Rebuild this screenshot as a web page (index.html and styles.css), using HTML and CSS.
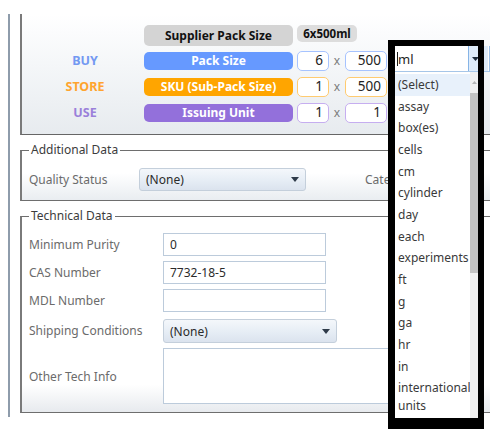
FILE: index.html
```html
<!DOCTYPE html>
<html>
<head>
<meta charset="utf-8">
<title>Item Details</title>
<link rel="stylesheet" href="styles.css">
</head>
<body>
<div class="page">
  <div class="frame">
    <section class="pack">
      <div class="pack-grid">
        <span class="role"></span>
        <div class="pill pill-supplier">Supplier Pack Size</div>
        <div class="pack-value">6x500ml</div>

        <div class="role role-buy">BUY</div>
        <div class="pill pill-buy">Pack Size</div>
        <div class="num num-buy">6</div>
        <div class="times">x</div>
        <div class="num num-buy">500</div>

        <div class="role role-store">STORE</div>
        <div class="pill pill-store">SKU (Sub-Pack Size)</div>
        <div class="num num-store">1</div>
        <div class="times">x</div>
        <div class="num num-store">500</div>

        <div class="role role-use">USE</div>
        <div class="pill pill-use">Issuing Unit</div>
        <div class="num num-use">1</div>
        <div class="times">x</div>
        <div class="num num-use">1</div>
      </div>
    </section>

    <fieldset class="group group-additional">
      <legend>Additional Data</legend>
      <div class="field-row">
        <span class="label label-quality">Quality Status</span>
        <div class="combo combo-quality">
          <span>(None)</span>
          <svg class="caret" width="8" height="5" viewBox="0 0 8 5"><path d="M0 0h8L4 5z" fill="#2f3b4a"/></svg>
        </div>
        <span class="label label-cate">Cate</span>
      </div>
    </fieldset>

    <fieldset class="group group-technical">
      <legend>Technical Data</legend>
      <div class="tech-grid">
        <span class="label">Minimum Purity</span>
        <div class="text-input">0</div>
        <span class="label">CAS Number</span>
        <div class="text-input">7732-18-5</div>
        <span class="label">MDL Number</span>
        <div class="text-input"></div>
        <span class="label">Shipping Conditions</span>
        <div class="combo combo-shipping">
          <span>(None)</span>
          <svg class="caret" width="8" height="5" viewBox="0 0 8 5"><path d="M0 0h8L4 5z" fill="#2f3b4a"/></svg>
        </div>
        <span class="label">Other Tech Info</span>
        <div class="text-area"></div>
      </div>
    </fieldset>
  </div>

  <div class="dropdown">
    <div class="dd-field">
      <span class="dd-caret-line"></span><span class="dd-value">ml</span>
      <div class="dd-button">
        <svg width="7" height="4" viewBox="0 0 7 4"><path d="M0 0h7L3.5 4z" fill="#1f2d3d"/></svg>
      </div>
    </div>
    <div class="dd-list">
      <ul class="dd-items">
        <li class="dd-item dd-selected">(Select)</li>
        <li class="dd-item">assay</li>
        <li class="dd-item">box(es)</li>
        <li class="dd-item">cells</li>
        <li class="dd-item">cm</li>
        <li class="dd-item">cylinder</li>
        <li class="dd-item">day</li>
        <li class="dd-item">each</li>
        <li class="dd-item">experiments</li>
        <li class="dd-item">ft</li>
        <li class="dd-item">g</li>
        <li class="dd-item">ga</li>
        <li class="dd-item">hr</li>
        <li class="dd-item">in</li>
        <li class="dd-item">international units</li>
      </ul>
      <div class="dd-scroll">
        <div class="dd-scroll-up">
          <svg width="5" height="3" viewBox="0 0 5 3"><path d="M0 3h5L2.5 0z" fill="#b5b5b5"/></svg>
        </div>
        <div class="dd-thumb"></div>
      </div>
    </div>
  </div>
  <div class="highlight-box"></div>
</div>
</body>
</html>
```

FILE: styles.css
```css
html, body {
  margin: 0;
  padding: 0;
  background: #ffffff;
}

body {
  font-family: "Noto Sans", "Open Sans", "DejaVu Sans", sans-serif;
  font-size: 12px;
  color: #333333;
}

.page {
  position: relative;
  width: 490px;
  height: 429px;
  overflow: hidden;
  padding-top: 14px;
  box-sizing: border-box;
}

.frame {
  margin-left: 8px;
  border-left: 2px solid #8e9cab;
  padding-left: 10px;
  padding-bottom: 4px;
}

/* ---------- pack section ---------- */
.pack {
  border-left: 2px solid #7a7a7a;
  border-bottom: 1px solid #666666;
  background: linear-gradient(to bottom, #ffffff 0%, #fbfcfd 15%, #e7ebef 100%);
  padding: 10px 0 10px 8px;
}

.pack-grid {
  display: grid;
  grid-template-columns: 110px 149px 32px 8px 42px;
  column-gap: 4px;
  row-gap: 4px;
  grid-auto-rows: 22px;
  align-items: center;
}

.role {
  text-align: center;
  font-weight: 700;
  font-size: 12.5px;
  line-height: 18px;
}

.role-buy { color: #7399f2; }
.role-store { color: #ffa42e; }
.role-use { color: #9a80da; }

.pill {
  height: 18px;
  line-height: 18px;
  border-radius: 5px;
  color: #ffffff;
  font-weight: 700;
  font-size: 12px;
  text-align: center;
  white-space: nowrap;
  overflow: hidden;
}

.pill-supplier {
  align-self: start;
  height: 21px;
  line-height: 22px;
  background: #d4d4d4;
  color: #111111;
  margin-top: 1px;
}

.pill-buy { background: #6699ff; }
.pill-store { background: #ffa500; }
.pill-use { background: #9370db; }

.pack-value {
  grid-column: 3 / span 3;
  justify-self: start;
  align-self: start;
  margin-top: 1px;
  width: 60px;
  height: 17px;
  line-height: 17px;
  border-radius: 5px;
  background: #dddddd;
  color: #111111;
  font-weight: 700;
  font-size: 11.5px;
  text-align: center;
}

.num {
  height: 20px;
  box-sizing: border-box;
  border: 1.5px solid;
  border-radius: 5px;
  background: #ffffff;
  text-align: right;
  padding-right: 5px;
  line-height: 17px;
  font-size: 13.5px;
  color: #222222;
}

.num-buy { border-color: #a6c3ff; }
.num-store { border-color: #ffcb70; }
.num-use { border-color: #c6aef0; }

.times {
  text-align: center;
  color: #7b7b7b;
  font-size: 12px;
  line-height: 18px;
}

/* ---------- fieldsets ---------- */
.group {
  margin: 7px 0 0 0;
  padding: 0 0 0 7px;
  border: 1px solid #6e6e6e;
  border-left: 2px solid #7a7a7a;
  border-right: none;
  min-width: 0;
}

.group legend {
  padding: 0 2px;
  margin-left: 0;
  line-height: 16px;
  font-size: 12px;
  color: #3c3c3c;
}

.group-additional {
  background: linear-gradient(to bottom, #ffffff 45%, #e9edf1 100%);
  padding-bottom: 9px;
}

.group-technical {
  background: linear-gradient(to bottom, #ffffff 86%, #e7eaee 100%);
  padding-top: 9px;
  padding-bottom: 8px;
}

.label {
  color: #6b6b6b;
  font-size: 12px;
  white-space: nowrap;
}

.field-row {
  display: flex;
  align-items: center;
  margin-top: 10px;
}

.label-quality {
  width: 110px;
}

.label-cate {
  margin-left: 59px;
}

.combo {
  display: flex;
  align-items: center;
  justify-content: space-between;
  box-sizing: border-box;
  border: 1px solid #c4cfdb;
  border-radius: 3px;
  background: linear-gradient(to bottom, #f4f7fb 0%, #e6edf5 55%, #dbe3ee 100%);
  padding: 0 6px 0 6px;
  color: #2b2b2b;
  font-size: 12px;
}

.combo-quality {
  width: 167px;
  height: 23px;
}

.combo-shipping {
  width: 174px;
  height: 24px;
}

.tech-grid {
  display: grid;
  grid-template-columns: 134px 1fr;
  align-items: center;
  row-gap: 5px;
}

.tech-grid .combo-shipping {
  margin-top: 2px;
}

.text-input {
  width: 163px;
  height: 23px;
  box-sizing: border-box;
  border: 1px solid #bccbdb;
  background: #ffffff;
  padding-left: 6px;
  line-height: 22px;
  color: #2b2b2b;
  font-size: 12px;
}

.text-area {
  width: 260px;
  height: 56px;
  box-sizing: border-box;
  border: 1px solid #bccbdb;
  background: #ffffff;
}

/* ---------- open unit dropdown ---------- */
.dropdown {
  position: absolute;
  left: 393px;
  top: 46px;
  width: 97px;
  height: 383px;
  display: flex;
  flex-direction: column;
}

.dd-field {
  display: flex;
  align-items: center;
  height: 26px;
  box-sizing: border-box;
  background: #ffffff;
  border-bottom: 1px solid #a6c6e8;
  border-right: 1px solid #9cc0e8;
  padding-left: 4px;
}

.dd-caret-line {
  width: 1px;
  height: 14px;
  background: #1a1a1a;
}

.dd-value {
  font-size: 13px;
  color: #1e1e1e;
  margin-left: 0;
}

.dd-button {
  margin-left: auto;
  width: 20px;
  align-self: stretch;
  box-sizing: border-box;
  border-left: 1px solid #86b4e6;
  background: #dfecfa;
  display: flex;
  align-items: center;
  padding-left: 3px;
  margin-right: 1px;
}

.dd-list {
  display: flex;
  width: 85px;
  flex: 1;
  background: #ffffff;
  overflow: hidden;
}

.dd-items {
  list-style: none;
  margin: 0;
  padding: 2px 0 0 0;
  flex: 1;
  min-width: 0;
}

.dd-item {
  padding: 1.85px 0 1.85px 5px;
  line-height: 18px;
  font-size: 12px;
  color: #3a3a3a;
}

.dd-selected {
  background: #e8f1fb;
}

.dd-scroll {
  width: 8px;
  background: #f0f0f0;
  display: flex;
  flex-direction: column;
  align-items: center;
}

.dd-scroll-up {
  height: 21px;
  display: flex;
  align-items: center;
}

.dd-thumb {
  width: 8px;
  height: 180px;
  background: #c3c3c3;
}

.highlight-box {
  position: absolute;
  left: 388px;
  top: 40px;
  width: 96px;
  height: 389px;
  box-sizing: border-box;
  border-style: solid;
  border-color: #000000;
  border-width: 6px 6px 11px 7px;
  pointer-events: none;
}
```
